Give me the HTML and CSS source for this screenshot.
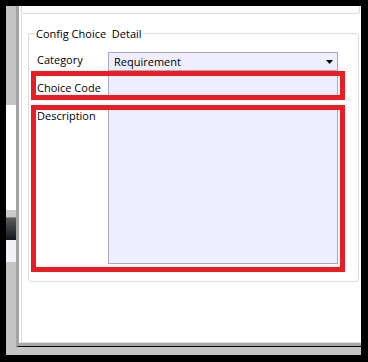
FILE: index.html
```html
<!DOCTYPE html>
<html>
<head>
<meta charset="utf-8">
<link rel="stylesheet" href="styles.css">
</head>
<body>
<div class="window">
  <div class="strip">
    <div class="s-gray"></div>
    <div class="s-white"></div>
    <div class="s-thumb"></div>
    <div class="s-light"></div>
  </div>
  <div class="main">
    <div class="frame">
      <div class="topbar"></div>
      <div class="panel">
        <div class="group">
          <span class="legend">Config Choice&nbsp; Detail</span>
          <div class="row row-cat">
            <span class="lbl">Category</span>
            <div class="select"><span>Requirement</span><svg class="arrow" width="7" height="4" viewBox="0 0 7 4"><path d="M0 0H7L3.5 4Z" fill="#000"/></svg></div>
          </div>
          <div class="row row-code">
            <span class="lbl lbl-code">Choice Code</span>
            <div class="input"></div>
          </div>
          <div class="row row-desc">
            <span class="lbl">Description</span>
            <div class="input textarea"></div>
          </div>
          <div class="hl hl-1"></div>
          <div class="hl hl-2"></div>
        </div>
      </div>
    </div>
  </div>
</div>
</body>
</html>
```

FILE: styles.css
```css
* { box-sizing: border-box; }
html, body { margin: 0; padding: 0; background: #fff; }
body {
  font-family: "Open Sans", "Noto Sans", sans-serif;
  font-size: 11px;
  color: #000;
}
.window {
  width: 368px;
  height: 362px;
  border-style: solid;
  border-color: #000;
  border-width: 6px 7px 7px 6px;
  background: #c4c4c4;
  display: flex;
  align-items: flex-start;
}
.strip {
  width: 10px;
  display: flex;
  flex-direction: column;
}
.s-gray { height: 99px; background: #c4c4c4; }
.s-white { height: 105px; background: #fff; }
.s-thumb {
  height: 30px;
  background: linear-gradient(#cacaca 0 7px, #8a8a8a 7px 8px, #5c5c5c 8px, #0e161c 100%);
}
.s-light { height: 22px; background: #f2f2f6; }

.main {
  width: 345px;
  height: 341px;
  border-left: 3px solid #a4a4a4;
  border-bottom: 1px solid #000;
  background: #fff;
}
.frame {
  height: 100%;
  border-bottom: 3px solid #a8a8a8;
  padding: 0 1px 0 2px;
  display: flex;
  flex-direction: column;
}
.topbar {
  height: 8px;
  border: 1px solid #d5dce4;
  border-top: none;
  border-radius: 0 0 3px 3px;
}
.panel {
  flex: 1;
  border-left: 1px solid #d5dce4;
  border-bottom: 1px solid #d5dce4;
  padding-top: 19px;
}
.group {
  position: relative;
  margin: 0 1px 0 6px;
  height: 249px;
  border: 1px solid #d5dce4;
  border-radius: 3px;
  padding: 18px 0 0 8px;
}
.legend {
  position: absolute;
  top: -8px;
  left: 6px;
  padding: 0 1px;
  line-height: 16px;
  background: #fff;
  white-space: nowrap;
}
.row {
  display: grid;
  grid-template-columns: 71px 230px;
}
.lbl { line-height: 16px; white-space: nowrap; }
.lbl-code { margin-top: 5px; }
.row-cat { height: 19px; }
.row-code { height: 20px; margin-top: 4px; }
.row-desc { height: 156px; margin-top: 13px; }
.select, .input {
  background: #eeeeff;
  border: 1px solid #a8a8b8;
}
.select {
  display: flex;
  align-items: flex-start;
  padding: 1px 0 0 5px;
  line-height: 16px;
}
.arrow { margin: 6px 4px 0 auto; display: block; }
.hl {
  position: absolute;
  left: 2px;
  width: 314px;
  border: 5px solid #ec1c24;
}
.hl-1 { top: 37px; height: 29px; }
.hl-2 { top: 71px; height: 167px; }
```
